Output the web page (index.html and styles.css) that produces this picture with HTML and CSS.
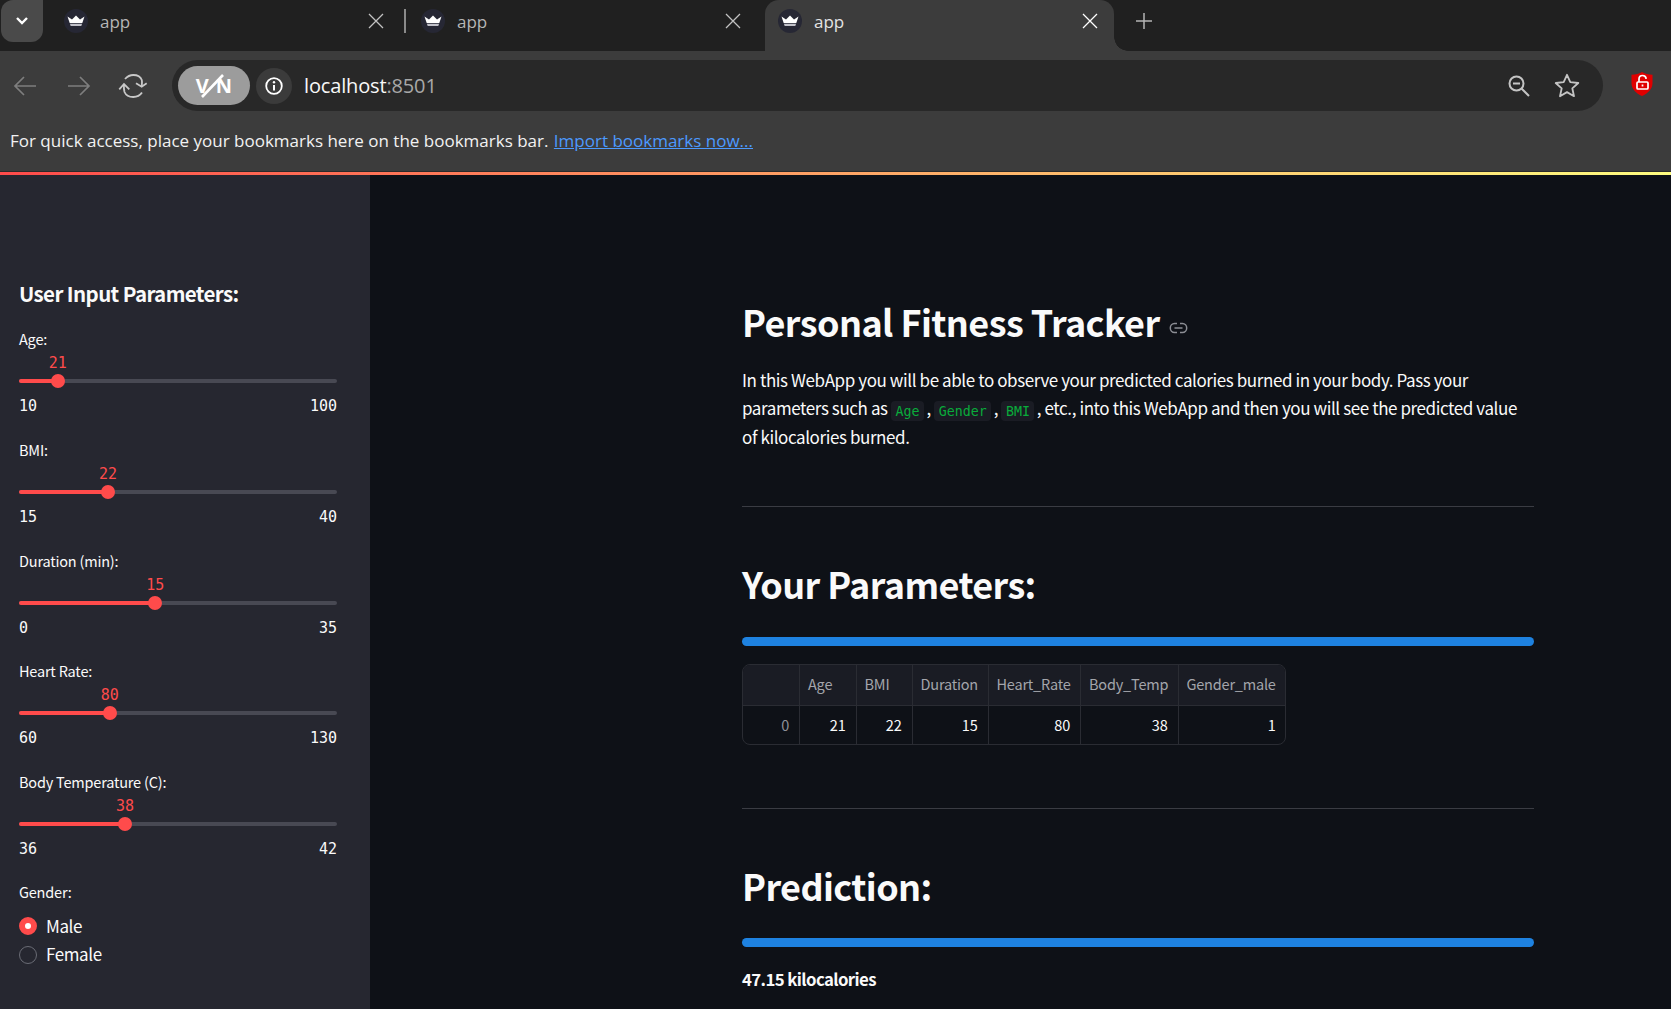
FILE: index.html
```html
<!DOCTYPE html>
<html lang="en">
<head>
<meta charset="utf-8">
<title>app</title>
<link rel="stylesheet" href="styles.css">
</head>
<body>
<svg class="defs" width="0" height="0" aria-hidden="true">
  <symbol id="fav" viewBox="0 0 24 24">
    <circle cx="12" cy="12" r="12" fill="#262734"/>
    <path d="M3.500 7.500 8 10.500 12 6.500 16 10.500 20.500 7.500 18.300 14H5.700Z" fill="#fff"/>
    <path d="M5.900 14.800H18.100L17.300 17H6.700Z" fill="#c2c2ca"/>
  </symbol>
  <symbol id="close" viewBox="0 0 16 16">
    <path d="M1 1 15 15M15 1 1 15" stroke="currentColor" stroke-width="1.300" fill="none"/>
  </symbol>
</svg>

<header class="tabstrip">
  <div class="tabmenu">
    <svg width="14" height="10" viewBox="0 0 14 10"><path d="M2 2 7 7 12 2" stroke="#fff" stroke-width="2.400" fill="none"/></svg>
  </div>
  <div class="tab">
    <svg class="favicon"><use href="#fav"/></svg><span class="tabtitle">app</span>
    <svg class="tabclose"><use href="#close"/></svg>
  </div>
  <div class="tab tab-sep">
    <svg class="favicon"><use href="#fav"/></svg><span class="tabtitle">app</span>
    <svg class="tabclose"><use href="#close"/></svg>
  </div>
  <div class="tab tab-active">
    <svg class="favicon"><use href="#fav"/></svg><span class="tabtitle">app</span>
    <svg class="tabclose"><use href="#close"/></svg>
  </div>
  <svg class="newtab" width="16" height="16" viewBox="0 0 16 16"><path d="M8 0V16M0 8H16" stroke="#b4b4b4" stroke-width="1.500"/></svg>
</header>

<section class="toolbar">
  <div class="navrow">
    <svg class="nav nav-back" width="24" height="20" viewBox="0 0 24 20"><path d="M23 10H2M11 1 2 10 11 19" stroke="#7e7e7e" stroke-width="1.700" fill="none"/></svg>
    <svg class="nav nav-fwd" width="24" height="20" viewBox="0 0 24 20"><path d="M1 10H22M13 1 22 10 13 19" stroke="#7e7e7e" stroke-width="1.700" fill="none"/></svg>
    <svg class="nav nav-reload" width="30" height="26" viewBox="0 0 30 26">
      <path d="M7 6C9.500 3.200 12.500 2 15.300 2 19 2 22.500 3.500 23.800 7 24.300 9 23.900 11.500 23.700 13.700M24 19.500C22 22.500 19 24 15.300 24 11.500 24 8 22.500 6.500 19 5.800 16.500 5.800 13.500 6 11" stroke="#c8c8c8" stroke-width="1.800" fill="none"/>
      <path d="M18 10.300 23.700 13.700 28.700 10.300M1.300 16.300 6 11 11.300 16.300" stroke="#c8c8c8" stroke-width="1.800" fill="none"/>
    </svg>
    <div class="omnibox">
      <div class="vpn"><span>V</span><span>N</span>
        <svg class="vpn-slash" width="26" height="26" viewBox="0 0 26 26"><path d="M3 24 24 2" stroke="#fff" stroke-width="2.600"/></svg>
      </div>
      <div class="siteinfo">
        <svg width="18" height="18" viewBox="0 0 18 18"><circle cx="9" cy="9" r="7.800" stroke="#fff" stroke-width="1.800" fill="none"/><path d="M9 8V13.500" stroke="#fff" stroke-width="2"/><circle cx="9" cy="5.200" r="1.200" fill="#fff"/></svg>
      </div>
      <div class="url">localhost<span class="url-dim">:8501</span></div>
      <svg class="omni-zoom" width="22" height="22" viewBox="0 0 22 22"><circle cx="8.500" cy="8.500" r="7" stroke="#c4c4c4" stroke-width="2" fill="none"/><path d="M5 8.500H12M13.500 13.500 21 21" stroke="#c4c4c4" stroke-width="2" fill="none"/></svg>
      <svg class="omni-star" width="26" height="26" viewBox="0 0 26 26"><path d="M13 1.800 16.300 9.200 24.300 10 18.300 15.300 20 23.200 13 19.100 6 23.200 7.700 15.300 1.700 10 9.700 9.200Z" stroke="#c4c4c4" stroke-width="1.800" stroke-linejoin="round" fill="none"/></svg>
    </div>
    <svg class="shield" width="22" height="24" viewBox="0 0 22 24">
      <path d="M11 0C14 1.800 17.500 2.600 21.500 2.800V11C21.500 17 17 21.500 11 24 5 21.500 .5 17 .5 11V2.800C4.500 2.600 8 1.800 11 0Z" fill="#e00000"/>
      <path d="M8 10V7C8 5 9.500 3.500 11.500 3.500 13.500 3.500 15 5 15.200 6.800" stroke="#fff" stroke-width="1.700" fill="none"/>
      <rect x="6" y="10" width="11" height="7" rx="1" stroke="#fff" stroke-width="1.700" fill="none"/>
      <path d="M11.500 12.500V14.500" stroke="#fff" stroke-width="1.700"/>
    </svg>
  </div>
  <div class="bookmarks">For quick access, place your bookmarks here on the bookmarks bar. <a class="import" href="#">Import bookmarks now...</a></div>
</section>
<div class="decoration"></div>

<div class="app">
  <aside class="sidebar">
    <h3 class="side-title">User Input Parameters:</h3>
    <div class="slider">
      <div class="field-label">Age:</div>
      <div class="val-row"><span class="val" style="left:12.22%">21</span></div>
      <div class="track-row"><div class="track"><div class="fill" style="width:12.22%"></div><div class="thumb" style="left:12.22%"></div></div></div>
      <div class="minmax"><span>10</span><span>100</span></div>
    </div>
    <div class="slider">
      <div class="field-label">BMI:</div>
      <div class="val-row"><span class="val" style="left:28%">22</span></div>
      <div class="track-row"><div class="track"><div class="fill" style="width:28%"></div><div class="thumb" style="left:28%"></div></div></div>
      <div class="minmax"><span>15</span><span>40</span></div>
    </div>
    <div class="slider">
      <div class="field-label">Duration (min):</div>
      <div class="val-row"><span class="val" style="left:42.86%">15</span></div>
      <div class="track-row"><div class="track"><div class="fill" style="width:42.86%"></div><div class="thumb" style="left:42.86%"></div></div></div>
      <div class="minmax"><span>0</span><span>35</span></div>
    </div>
    <div class="slider">
      <div class="field-label">Heart Rate:</div>
      <div class="val-row"><span class="val" style="left:28.57%">80</span></div>
      <div class="track-row"><div class="track"><div class="fill" style="width:28.57%"></div><div class="thumb" style="left:28.57%"></div></div></div>
      <div class="minmax"><span>60</span><span>130</span></div>
    </div>
    <div class="slider">
      <div class="field-label">Body Temperature (C):</div>
      <div class="val-row"><span class="val" style="left:33.33%">38</span></div>
      <div class="track-row"><div class="track"><div class="fill" style="width:33.33%"></div><div class="thumb" style="left:33.33%"></div></div></div>
      <div class="minmax"><span>36</span><span>42</span></div>
    </div>
    <div class="radio-group">
      <div class="field-label">Gender:</div>
      <div class="radios">
        <div class="radio"><span class="dot dot-on"></span>Male</div>
        <div class="radio"><span class="dot"></span>Female</div>
      </div>
    </div>
  </aside>

  <main class="main">
    <div class="heading-row">
      <h1 class="title">Personal Fitness Tracker</h1>
      <svg class="anchor" width="19" height="12" viewBox="0 0 19 12"><path d="M8 1.500H5.500C3.200 1.500 1.300 3.500 1.300 6S3.200 10.500 5.500 10.500H8M11 1.500H13.500C15.800 1.500 17.700 3.500 17.700 6S15.800 10.500 13.500 10.500H11M5.500 6H13.500" stroke="#8b8d94" stroke-width="1.500" fill="none"/></svg>
    </div>
    <div class="intro">
      <p class="line">In this WebApp you will be able to observe your predicted calories burned in your body. Pass your</p>
      <p class="line"><span>parameters such as</span> <code class="code">Age</code> <span>,</span> <code class="code">Gender</code> <span>,</span> <code class="code">BMI</code> <span>, etc., into this WebApp and then you will see the predicted value</span></p>
      <p class="line">of kilocalories burned.</p>
    </div>
    <hr class="rule rule-first">
    <h2 class="section">Your Parameters:</h2>
    <div class="bar"></div>
    <div class="table-wrap">
      <table class="frame">
        <colgroup><col class="c0"><col class="c1"><col class="c2"><col class="c3"><col class="c4"><col class="c5"><col class="c6"></colgroup>
        <thead><tr><th></th><th>Age</th><th>BMI</th><th>Duration</th><th>Heart_Rate</th><th>Body_Temp</th><th>Gender_male</th></tr></thead>
        <tbody><tr><td class="idx">0</td><td>21</td><td>22</td><td>15</td><td>80</td><td>38</td><td>1</td></tr></tbody>
      </table>
    </div>
    <hr class="rule rule-second">
    <h2 class="section">Prediction:</h2>
    <div class="bar bar-pred"></div>
    <p class="result">47.15 kilocalories</p>
  </main>
</div>
</body>
</html>
```
FILE: styles.css
```css
* { box-sizing: border-box; }
html, body { margin: 0; height: 100%; overflow: hidden; background: #0e1117; }
body { display: flex; flex-direction: column; height: 1009px; font-family: "Noto Sans CJK SC", "Noto Sans", sans-serif; }
.defs { position: absolute; }

/* browser chrome */
.tabstrip { display: flex; align-items: flex-start; height: 51px; flex: none; background: #202020; padding-left: 1px; font-family: "Open Sans", "Noto Sans", sans-serif; }
.tabmenu { width: 42px; height: 42px; border-radius: 0 0 12px 12px; border-top-left-radius: 12px; background: #4a4a4a; display: flex; align-items: center; justify-content: center; margin-right: 8px; }
.tab { position: relative; width: 349px; height: 51px; margin-right: 8px; padding: 9px 16px 18px 13px; display: flex; align-items: center; color: #b6b6b6; font-size: 17px; }
.tab-sep::before { content: ""; position: absolute; left: -4px; top: 9px; width: 2px; height: 24px; background: #8a8a8a; }
.tab-active { background: #3c3c3c; border-radius: 14px 14px 0 0; color: #e4e4e4; }
.tab-active::after { content: ""; position: absolute; right: -14px; bottom: 0; width: 14px; height: 14px; background: radial-gradient(circle at 100% 0, #202020 13.500px, #3c3c3c 14px); }
.tab-active .tabclose { color: #fff; }
.favicon { width: 24px; height: 24px; flex: none; margin-right: 12px; }
.tabtitle { line-height: 24px; padding-top: 2px; }
.tabclose { width: 16px; height: 16px; margin-left: auto; color: #c2c2c2; }
.newtab { margin: 13px 0 0 14px; }

.toolbar { height: 121px; flex: none; background: #3c3c3c; display: flex; flex-direction: column; font-family: "Open Sans", "Noto Sans", sans-serif; border-bottom: 1px solid #2b2b2b; }
.navrow { display: flex; align-items: center; height: 51px; margin-top: 9px; flex: none; }
.nav { flex: none; }
.nav-back { margin-left: 13px; }
.nav-fwd { margin-left: 30px; }
.nav-reload { margin-left: 27px; }
.omnibox { width: 1431px; height: 51px; margin-left: 24px; border-radius: 26px; background: #282828; display: flex; align-items: center; padding-left: 6px; }
.vpn { position: relative; width: 72px; height: 39px; border-radius: 20px; background: #9c9c9c; display: flex; align-items: center; justify-content: center; gap: 7px; color: #fff; font: 700 20px/1 "Open Sans", sans-serif; }
.vpn-slash { position: absolute; left: 21px; top: 7px; }
.siteinfo { width: 36px; height: 36px; margin-left: 6px; border-radius: 50%; background: #3b3b3b; display: flex; align-items: center; justify-content: center; }
.url { margin-left: 12px; font-size: 20px; line-height: 28px; color: #f8f8f8; letter-spacing: -.15px; }
.url-dim { color: #a8a8a8; }
.omni-zoom { margin-left: auto; }
.omni-star { margin: 0 23px 0 24px; }
.shield { margin-left: 28px; flex: none; margin-top: -3px; }
.bookmarks { flex: 1; padding-left: 10px; font-size: 17px; line-height: 59px; color: #f2f2f2; }
.import { color: #4c9aff; text-decoration: underline; margin-left: 1px; }
.decoration { height: 3px; flex: none; background: linear-gradient(90deg, #ff4b4b, #fffd80); }

/* app */
.app { flex: 1; display: flex; min-height: 0; overflow: hidden; }
.sidebar { width: 370px; flex: none; background: #262730; padding: 102px 33px 0 19px; color: #fafafa; display: flex; flex-direction: column; gap: 19.750px; }
.side-title { margin: 0 0 -1.750px; font-size: 20.500px; line-height: 32px; font-weight: 600; letter-spacing: -.6px; }
.field-label { font-size: 14.500px; line-height: 24px; margin-bottom: 1px; letter-spacing: -.2px; }
.val-row { position: relative; height: 22px; }
.val { position: absolute; transform: translateX(-50%); font: 15px/22px "DejaVu Sans Mono", monospace; color: #ff4b4b; }
.track-row { height: 14px; display: flex; align-items: center; }
.track { position: relative; width: 100%; height: 4px; border-radius: 2px; background: #484953; }
.fill { height: 100%; border-radius: 2px; background: #ff4b4b; }
.thumb { position: absolute; top: -5px; width: 14px; height: 14px; margin-left: -7px; border-radius: 50%; background: #ff4b4b; }
.minmax { display: flex; justify-content: space-between; margin-top: 6px; font: 15px/24px "DejaVu Sans Mono", monospace; }
.radio-group { margin-top: -1px; }
.radios { margin-top: 7px; }
.radio { display: flex; align-items: center; height: 28.500px; font-size: 17px; gap: 9px; letter-spacing: -.4px; }
.dot { width: 18px; height: 18px; margin-top: 2px; border-radius: 50%; border: 1px solid #6a6c75; }
.dot-on { border: 6px solid #ff4b4b; background: #fff; }

.main { flex: 1; min-width: 0; padding: 118px 137px 0 372px; color: #fafafa; }
.heading-row { display: flex; align-items: center; height: 56px; gap: 9px; }
.title { margin: 0; font-size: 36px; line-height: 56px; font-weight: 700; letter-spacing: -.58px; }
.anchor { margin-top: 14px; }
.intro { margin: 16.500px 0 0; font-size: 17px; line-height: 28.500px; letter-spacing: -.41px; }
.line { margin: 0; white-space: nowrap; }
.code { margin-right: -1px; padding: 2.500px 4.500px; border-radius: 4px; background: #1a1c24; color: #09ab3b; font: 13.300px "DejaVu Sans Mono", monospace; letter-spacing: 0; }
.rule { border: 0; height: 1px; background: #3a3c43; margin: 0; }
.rule-first { margin-top: 55px; }
.rule-second { margin-top: 63px; }
.section { margin: 54px 0 0; font-size: 36px; line-height: 44px; font-weight: 700; letter-spacing: -.6px; }
.bar { height: 9px; margin-top: 32px; border-radius: 5px; background: #1e82e0; }
.bar-pred { margin-top: 31px; }
.table-wrap { width: 544px; height: 81px; margin-top: 18px; border: 1px solid #2a2c33; border-radius: 8px; overflow: hidden; }
.frame { width: 100%; height: 100%; border-collapse: collapse; table-layout: fixed; font-size: 14.500px; letter-spacing: -.2px; }
.c0 { width: 56.500px; } .c1 { width: 56.500px; } .c2 { width: 56px; } .c3 { width: 76px; } .c4 { width: 92.500px; } .c5 { width: 97.500px; } .c6 { width: 107.500px; }
.frame th, .frame td { border: 1px solid #2a2c33; padding: 0 10px 0 8px; }
.frame tr > :first-child { border-left: 0; }
.frame tr > :last-child { border-right: 0; }
.frame thead th { border-top: 0; height: 40px; padding-bottom: 2px; background: #1a1c24; color: #a3a5ab; font-weight: 400; text-align: left; }
.frame tbody td { border-bottom: 0; text-align: right; color: #fafafa; }
.frame tbody .idx { color: #8f9198; }
.result { margin: 18px 0 0; font-size: 16.800px; line-height: 28px; font-weight: 600; letter-spacing: -.6px; }
```
